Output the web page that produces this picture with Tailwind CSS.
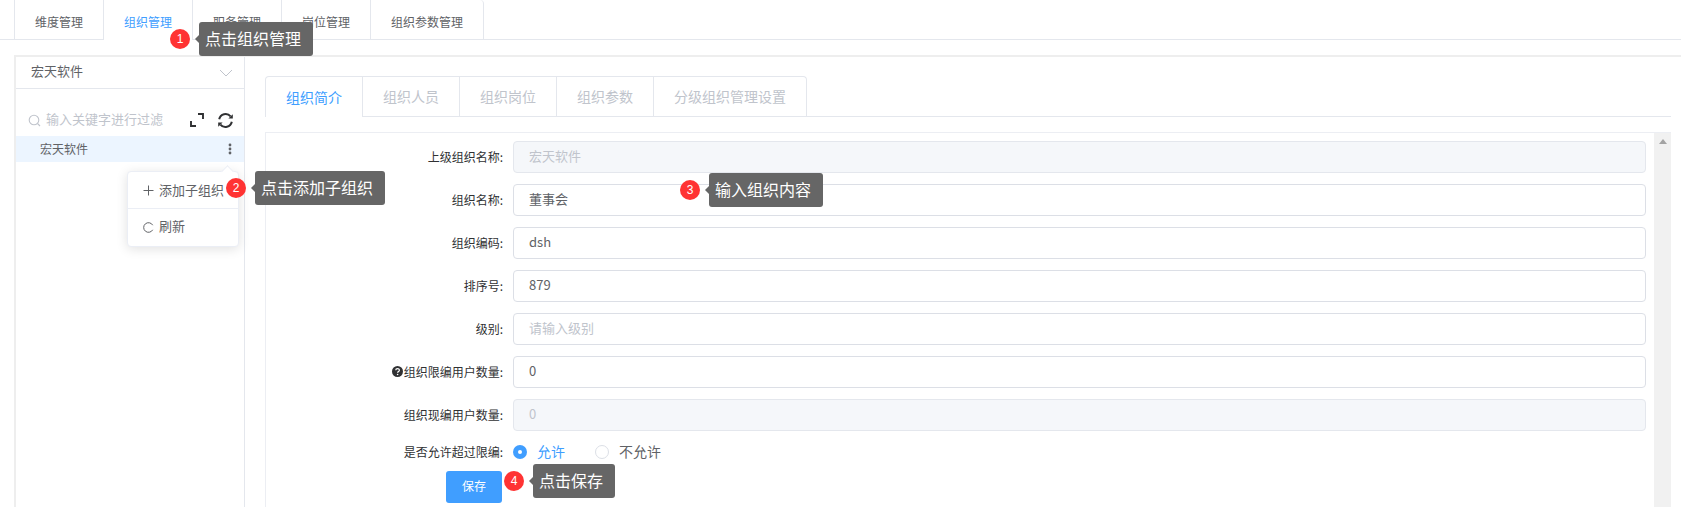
<!DOCTYPE html>
<html lang="zh">
<head>
<meta charset="utf-8">
<script src="https://cdn.jsdelivr.net/npm/@tailwindcss/browser@4"></script>
</head>
<body class="m-0 bg-white">
<div class="relative w-[1681px] h-[507px] overflow-hidden bg-white text-[12px] text-[#606266] font-['Noto_Sans_CJK_SC','Liberation_Sans',sans-serif]">
  <!-- top tabs -->
  <div class="h-[40px] pl-[14px] flex border-b border-[#e4e7ed]">
    <div class="w-[90px] h-[40px] pt-[4px] flex items-center justify-center border border-t-0 border-[#e4e7ed]">维度管理</div>
    <div class="w-[89px] h-[40px] pt-[4px] flex items-center justify-center border-r border-[#e4e7ed] bg-white text-[#409eff]">组织管理</div>
    <div class="w-[89px] h-[39px] pt-[4px] flex items-center justify-center border-r border-[#e4e7ed]">职务管理</div>
    <div class="w-[89px] h-[39px] pt-[4px] flex items-center justify-center border-r border-[#e4e7ed]">岗位管理</div>
    <div class="w-[113px] h-[39px] pt-[4px] flex items-center justify-center border-r border-[#e4e7ed] rounded-tr-[4px]">组织参数管理</div>
  </div>

  <!-- body -->
  <div class="ml-[14px] mt-[15px] h-[452px] flex border-t-2 border-[#eeeeee]">
    <!-- sidebar -->
    <div class="w-[231px] shrink-0 border-l-2 border-r border-l-[#eeeeee] border-r-[#e4e7ed]">
      <div class="h-[28px] pb-[3px] flex items-center justify-between pl-[15px] pr-[11px] border-b border-[#e4e7ed] text-[13px] box-content">
        <span>宏天软件</span>
        <svg class="mt-[3px]" width="14" height="8" viewBox="0 0 14 8" fill="none" stroke="#c0c4cc" stroke-width="1"><path d="M1 1l6 6 6-6"/></svg>
      </div>
      <div class="h-[47px] pt-[15px] flex items-center pl-[12px]">
        <svg width="13" height="13" viewBox="0 0 13 13" fill="none" stroke="#c0c4cc" stroke-width="1.1"><circle cx="6" cy="6" r="4.8"/><path d="M9.5 9.5l2.5 2.5"/></svg>
        <span class="ml-[5px] pb-[3px] text-[13px] text-[#c0c4cc] whitespace-nowrap">输入关键字进行过滤</span>
        <svg class="ml-[27px]" width="14" height="14" viewBox="0 0 14 14" fill="none" stroke="#303133" stroke-width="1.9"><path d="M8 1h5v5M1 8v5h5"/></svg>
        <svg class="ml-[13px]" width="17" height="17" viewBox="0 0 17 17" fill="none" stroke="#303133" stroke-width="2"><path d="M2.2 7.2A6.5 6.5 0 0 1 13.6 4.4"/><path d="M14.8 9.8A6.5 6.5 0 0 1 3.4 12.6"/><path d="M15.8 2.2v4.4h-4.4z" fill="#303133" stroke="none"/><path d="M1.2 14.8v-4.4h4.4z" fill="#303133" stroke="none"/></svg>
      </div>
      <div class="h-[26px] pb-[1px] bg-[#ecf5ff] flex items-center justify-between pl-[24px] pr-[12px]">
        <span>宏天软件</span>
        <svg class="mt-[1px]" width="4" height="12" viewBox="0 0 4 12" fill="#606266"><circle cx="2" cy="2" r="1.4"/><circle cx="2" cy="6" r="1.4"/><circle cx="2" cy="10" r="1.4"/></svg>
      </div>
    </div>

    <!-- main -->
    <div class="flex-1 pl-[20px] pr-[10px] pt-[19px] min-w-0">
      <div class="h-[41px] flex border-b border-[#e4e7ed]">
        <div class="h-[41px] w-[98px] flex items-center justify-center text-[14px] text-[#409eff] bg-white border border-b-0 border-[#e4e7ed] rounded-tl-[4px]">组织简介</div>
        <div class="h-[40px] w-[97px] flex items-center justify-center text-[14px] text-[#c0c4cc] border-y border-r border-b-0 border-[#e4e7ed]">组织人员</div>
        <div class="h-[40px] w-[97px] flex items-center justify-center text-[14px] text-[#c0c4cc] border-y border-r border-b-0 border-[#e4e7ed]">组织岗位</div>
        <div class="h-[40px] w-[97px] flex items-center justify-center text-[14px] text-[#c0c4cc] border-y border-r border-b-0 border-[#e4e7ed]">组织参数</div>
        <div class="h-[40px] w-[153px] flex items-center justify-center text-[14px] text-[#c0c4cc] border-y border-r border-b-0 border-[#e4e7ed] rounded-tr-[4px]">分级组织管理设置</div>
      </div>
      <div class="mt-[15px] h-[400px] flex border-t border-l border-[#eceef3]">
        <div class="flex-1 min-w-0 pt-[8px] pr-[8px]">
          <div class="flex flex-col gap-[11px]">
            <div class="flex items-center h-[32px]"><label class="w-[237px] pb-[1px] text-right text-[#303133]">上级组织名称:</label><div class="ml-[10px] flex-1 h-[32px] pb-[2px] flex items-center px-[15px] text-[13px] text-[#c0c4cc] bg-[#f5f7fa] border border-[#e4e7ed] rounded-[4px]">宏天软件</div></div>
            <div class="flex items-center h-[32px]"><label class="w-[237px] pb-[1px] text-right text-[#303133]">组织名称:</label><div class="ml-[10px] flex-1 h-[32px] pb-[3px] flex items-center px-[15px] text-[13px] border border-[#dcdfe6] rounded-[4px]">董事会</div></div>
            <div class="flex items-center h-[32px]"><label class="w-[237px] pb-[1px] text-right text-[#303133]">组织编码:</label><div class="ml-[10px] flex-1 h-[32px] pb-[2px] flex items-center px-[15px] text-[13px] border border-[#dcdfe6] rounded-[4px]">dsh</div></div>
            <div class="flex items-center h-[32px]"><label class="w-[237px] pb-[1px] text-right text-[#303133]">排序号:</label><div class="ml-[10px] flex-1 h-[32px] pb-[2px] flex items-center px-[15px] text-[13px] border border-[#dcdfe6] rounded-[4px]">879</div></div>
            <div class="flex items-center h-[32px]"><label class="w-[237px] pb-[1px] text-right text-[#303133]">级别:</label><div class="ml-[10px] flex-1 h-[32px] pb-[2px] flex items-center px-[15px] text-[13px] text-[#c0c4cc] border border-[#dcdfe6] rounded-[4px]">请输入级别</div></div>
            <div class="flex items-center h-[32px]">
              <label class="w-[237px] pb-[1px] flex items-center justify-end text-[#303133]">
                <svg class="mr-[1px]" width="11" height="11" viewBox="0 0 10 10"><circle cx="5" cy="5" r="5" fill="#303133"/><path d="M3.4 3.9c0-2.1 3.3-2.1 3.3-.1 0 1.2-1.6 1.2-1.6 2.4" fill="none" stroke="#fff" stroke-width="1.1"/><circle cx="5.1" cy="7.7" r=".7" fill="#fff"/></svg>组织限编用户数量:</label>
              <div class="ml-[10px] flex-1 h-[32px] pb-[2px] flex items-center px-[15px] text-[13px] border border-[#dcdfe6] rounded-[4px]">0</div>
            </div>
            <div class="flex items-center h-[32px]"><label class="w-[237px] pb-[1px] text-right text-[#303133]">组织现编用户数量:</label><div class="ml-[10px] flex-1 h-[32px] pb-[2px] flex items-center px-[15px] text-[13px] text-[#c0c4cc] bg-[#f5f7fa] border border-[#e4e7ed] rounded-[4px]">0</div></div>
          </div>
          <div class="flex items-center h-[20px] mt-[11px]">
            <label class="w-[237px] pb-[1px] text-right text-[#303133]">是否允许超过限编:</label>
            <div class="ml-[10px] w-[14px] h-[14px] rounded-full bg-[#409eff] flex items-center justify-center"><div class="w-[4px] h-[4px] rounded-full bg-white"></div></div>
            <span class="ml-[10px] pb-[2px] text-[14px] text-[#409eff]">允许</span>
            <div class="ml-[30px] w-[14px] h-[14px] rounded-full border border-[#dcdfe6] bg-white"></div>
            <span class="ml-[10px] pb-[2px] text-[14px] text-[#606266]">不允许</span>
          </div>
          <div class="ml-[180px] mt-[9px] w-[56px] h-[32px] pb-[2px] rounded-[3px] bg-[#409eff] text-white flex items-center justify-center">保存</div>
        </div>
        <!-- scrollbar -->
        <div class="w-[17px] shrink-0 bg-[#f1f1f1] flex justify-center pt-[6px]">
          <svg width="8" height="5" viewBox="0 0 8 5" fill="#a3a3a3"><path d="M4 0l4 5H0z"/></svg>
        </div>
      </div>
    </div>
  </div>

  <!-- context menu -->
  <div class="absolute left-[127px] top-[171px] w-[112px] h-[76px] bg-white rounded-[4px] border border-[#ebeef5] shadow-[0_2px_12px_rgba(0,0,0,0.12)]">
    <div class="absolute left-[95px] -top-[5px] w-[9px] h-[9px] rotate-45 bg-white border-l border-t border-[#ebeef5]"></div>
    <div class="relative h-[37px] flex items-center pl-[15px] text-[13px] border-b border-[#ebeef5]">
      <svg class="mr-[5px]" width="11" height="11" viewBox="0 0 11 11" fill="none" stroke="#606266" stroke-width="1"><path d="M5.5 0.5v10M0.5 5.5h10"/></svg>添加子组织
    </div>
    <div class="h-[36px] pb-[2px] flex items-center pl-[15px] text-[13px]">
      <svg class="mr-[5px] mt-[2px]" width="11" height="11" viewBox="0 0 11 11" fill="none" stroke="#606266" stroke-width="1"><path d="M9.7 3.2A4.8 4.8 0 1 0 9.7 7.8"/></svg>刷新
    </div>
  </div>

  <!-- annotations -->
  <div class="absolute left-[170px] top-[22px] flex items-center h-[34px]">
    <div class="w-[20px] h-[20px] rounded-full bg-[#ff3333] text-white text-[12px] flex items-center justify-center font-['Liberation_Sans',sans-serif]">1</div>
    <div class="ml-[9px] relative h-[34px] pb-[2px] px-[6px] flex items-center rounded-[3px] bg-[#666666] text-white text-[16px] w-[114px] whitespace-nowrap">
      <span class="absolute -left-[4px] top-[13px] w-0 h-0 border-y-[4px] border-y-transparent border-r-[4px] border-r-[#666666]"></span>点击组织管理
    </div>
  </div>
  <div class="absolute left-[226px] top-[171px] flex items-center h-[34px]">
    <div class="w-[20px] h-[20px] rounded-full bg-[#ff3333] text-white text-[12px] flex items-center justify-center font-['Liberation_Sans',sans-serif]">2</div>
    <div class="ml-[9px] relative h-[34px] pb-[2px] px-[6px] flex items-center rounded-[3px] bg-[#666666] text-white text-[16px] w-[130px] whitespace-nowrap">
      <span class="absolute -left-[4px] top-[13px] w-0 h-0 border-y-[4px] border-y-transparent border-r-[4px] border-r-[#666666]"></span>点击添加子组织
    </div>
  </div>
  <div class="absolute left-[680px] top-[173px] flex items-center h-[34px]">
    <div class="w-[20px] h-[20px] rounded-full bg-[#ff3333] text-white text-[12px] flex items-center justify-center font-['Liberation_Sans',sans-serif]">3</div>
    <div class="ml-[9px] relative h-[34px] pb-[2px] px-[6px] flex items-center rounded-[3px] bg-[#666666] text-white text-[16px] w-[114px] whitespace-nowrap">
      <span class="absolute -left-[4px] top-[13px] w-0 h-0 border-y-[4px] border-y-transparent border-r-[4px] border-r-[#666666]"></span>输入组织内容
    </div>
  </div>
  <div class="absolute left-[504px] top-[464px] flex items-center h-[34px]">
    <div class="w-[20px] h-[20px] rounded-full bg-[#ff3333] text-white text-[12px] flex items-center justify-center font-['Liberation_Sans',sans-serif]">4</div>
    <div class="ml-[9px] relative h-[34px] pb-[2px] px-[6px] flex items-center rounded-[3px] bg-[#666666] text-white text-[16px] w-[82px] whitespace-nowrap">
      <span class="absolute -left-[4px] top-[13px] w-0 h-0 border-y-[4px] border-y-transparent border-r-[4px] border-r-[#666666]"></span>点击保存
    </div>
  </div>
</div>
</body>
</html>
